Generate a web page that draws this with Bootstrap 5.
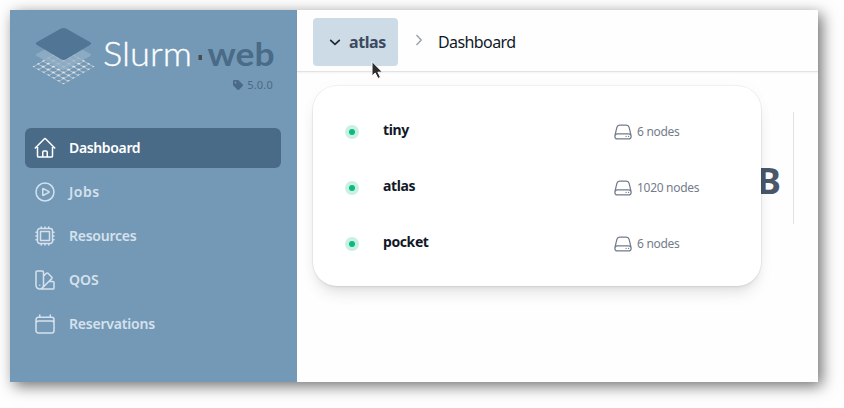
<!DOCTYPE html>
<html lang="en">
<head>
<meta charset="utf-8">
<meta name="viewport" content="width=device-width, initial-scale=1">
<title>Slurm-web</title>
<link href="https://cdn.jsdelivr.net/npm/bootstrap@5.3.0/dist/css/bootstrap.min.css" rel="stylesheet">
<style>
body{font-family:"Noto Sans","Open Sans",sans-serif;background:#fefefe;overflow:hidden;height:408px;padding:10px 26px 26px 10px}
svg{flex:none;display:block}
.ico{fill:none;stroke:currentColor;stroke-width:1.5;stroke-linecap:round;stroke-linejoin:round}
.window{height:372px;background:#fefefe;box-shadow:4px 4px 14px rgba(0,0,0,.56)}
.sidebar{width:287px;background:#7499b6;padding:15px 16px 0 15px}
.brand{height:103px}
.brand-version{font-size:11px;line-height:12px;color:#4a6b87;gap:4px;padding-right:8px;margin-top:-7px;letter-spacing:.2px}
.side-nav{gap:4px}
.side-nav .nav-link{height:40px;padding:0 8px;gap:12px;color:#d5e2ed;font-weight:600;font-size:14px;border-radius:6px}
.side-nav .nav-link.active{background:#4a6b87;color:#fff}
.side-nav span{letter-spacing:var(--ls,0);padding-bottom:2px}
.ls-a{--ls:-.35px}.ls-b{--ls:-.25px}.ls-c{--ls:-.2px}.ls-d{--ls:.5px}
.topbar{height:62px;border-bottom:1px solid #e2e3e5;padding:2px 16px 0;box-shadow:0 1px 2px rgba(0,0,0,.05)}
.cluster-btn{width:85px;height:48px;background:#cddbe6;border-radius:4px;border:0;color:#3c4a60;font-weight:700;font-size:16px;letter-spacing:-.4px;padding:0 0 0 14px;gap:6px}
.crumb-sep{margin-left:12px;color:#9ca3af;margin-top:-3px}
.crumb{margin-left:10px;font-size:16px;color:#111827;letter-spacing:-.6px}
.cluster-menu{left:16px;top:76px;width:448px;height:200px;border-radius:24px;background:#fff;padding:18px 32px 14px;box-shadow:0 0 0 1px rgba(17,24,39,.05),0 10px 15px -3px rgba(0,0,0,.1),0 4px 6px -4px rgba(0,0,0,.1),0 0 20px rgba(0,0,0,.02)}
.cluster-row{height:56px}
.status{width:14px;height:14px;background:#c9f1e3}
.status i{width:6px;height:6px;background:#0bb981}
.cluster-name{font-size:14px;font-weight:700;color:#111827;letter-spacing:-.4px;margin:-5px 0 0 24px;width:230px}
.nodes{font-size:12px;color:#747c8b;gap:4px}
.nodes span{letter-spacing:-.3px}
.stat{height:112px;margin:40px 24px 0 0;padding-right:12px;border-right:1px solid #e2e3e5}
.stat b{font-size:36px;line-height:40px;color:#4b5768;margin-top:26px}
.pointer{left:71px;top:50px;z-index:3}
</style>
<script src="https://cdn.jsdelivr.net/npm/bootstrap@5.3.0/dist/js/bootstrap.bundle.min.js"></script>
</head>
<body>
<svg width="0" height="0" class="position-absolute">
<symbol id="server" viewBox="0 0 24 24"><path d="M21.75 17.25v-.228a4.5 4.5 0 00-.12-1.03l-2.268-9.64a3.375 3.375 0 00-3.285-2.602H7.923a3.375 3.375 0 00-3.285 2.602l-2.268 9.64a4.5 4.5 0 00-.12 1.03v.228m19.5 0a3 3 0 01-3 3H5.25a3 3 0 01-3-3m19.5 0a3 3 0 00-3-3H5.25a3 3 0 00-3 3m16.5 0h.008v.008h-.008v-.008zm-3 0h.008v.008h-.008v-.008z"/></symbol>
</svg>
<div class="window d-flex">
  <aside class="sidebar flex-shrink-0">
    <div class="brand">
      <svg width="256" height="61" viewBox="25 25 256 61">
        <defs><pattern id="mesh" width="5" height="5" patternUnits="userSpaceOnUse" patternTransform="matrix(1.017 .583 -1.017 .583 63.5 49)"><path d="M0 0H5M0 0V5" stroke="#c3cfd9" stroke-width="1.1" fill="none"/><circle r="1.1" fill="#e6e6e6"/><circle cx="5" r="1.1" fill="#e6e6e6"/><circle cy="5" r="1.1" fill="#e6e6e6"/><circle cx="5" cy="5" r="1.1" fill="#e6e6e6"/></pattern></defs>
        <path d="M63.5 48.5L94.500 66.5L63.5 84.300L32.500 66.500Z" fill="url(#mesh)"/>
        <path d="M61 41q2.500-1.400 5 0L90.300 53.800q1.500 1 0 2.200L66 69.500q-2.500 1.400-5 0L36.700 56q-1.500-1.200 0-2.200Z" fill="#94b0c7" fill-opacity=".78"/>
        <path d="M61 28.600q2.500-1.400 5 0L90.300 42.300q1.800 1.200 0 2.400L66 59.200q-2.500 1.400-5 0L36.700 44.700q-1.800-1.200 0-2.400Z" fill="#507595"/>
        <text x="103" y="66" font-family="Lato, sans-serif" font-weight="300" font-size="33" fill="#fff" stroke="#fff" stroke-width=".3" textLength="89" lengthAdjust="spacingAndGlyphs">Slurm</text>
        <rect x="198.500" y="55" width="3.500" height="5" fill="#4b4b4f"/>
        <text x="207.500" y="66" font-family="Lato, sans-serif" font-weight="700" font-size="33" fill="#4a6b87" textLength="67" lengthAdjust="spacingAndGlyphs">web</text>
      </svg>
      <div class="brand-version d-flex justify-content-end align-items-center">
        <svg width="10" height="10" viewBox="0 0 20 20"><path fill="#4a6b87" fill-rule="evenodd" d="M0 2.500A2.500 2.500 0 012.500 0h7a3 3 0 012.100.9l7.500 7.600a3 3 0 010 4.200l-6.400 6.400a3 3 0 01-4.200 0L.9 11.600A3 3 0 010 9.500zM5 3.200a1.800 1.800 0 100 3.600 1.800 1.800 0 000-3.600z"/></svg>
        <span>5.0.0</span>
      </div>
    </div>
    <nav class="side-nav nav flex-column">
      <a class="nav-link active d-flex align-items-center ls-a" href="#"><svg class="ico" width="24" height="24" viewBox="0 0 24 24"><path d="M2.250 12l8.954-8.955c.44-.439 1.152-.439 1.591 0L21.750 12M4.500 9.750v10.125c0 .621.504 1.125 1.125 1.125H9.750v-4.875c0-.621.504-1.125 1.125-1.125h2.250c.621 0 1.125.504 1.125 1.125V21h4.125c.621 0 1.125-.504 1.125-1.125V9.750M8.250 21h8.250"/></svg><span>Dashboard</span></a>
      <a class="nav-link d-flex align-items-center ls-d" href="#"><svg class="ico" width="24" height="24" viewBox="0 0 24 24"><path d="M21 12a9 9 0 11-18 0 9 9 0 0118 0zM15.910 11.672a.375.375 0 010 .656l-5.603 3.113a.375.375 0 01-.557-.328V8.887c0-.286.307-.466.557-.327l5.603 3.112z"/></svg><span>Jobs</span></a>
      <a class="nav-link d-flex align-items-center ls-b" href="#"><svg class="ico" width="24" height="24" viewBox="0 0 24 24"><path d="M8.250 3v1.500M4.500 8.250H3m18 0h-1.500M4.500 12H3m18 0h-1.500m-15 3.750H3m18 0h-1.500M8.250 19.500V21M12 3v1.500m0 15V21m3.750-18v1.500m0 15V21m-9-1.500h10.500a2.250 2.250 0 002.250-2.250V6.750a2.250 2.250 0 00-2.250-2.250H6.750A2.250 2.250 0 004.500 6.750v10.500a2.250 2.250 0 002.250 2.250zm.75-12h9v9h-9v-9z"/></svg><span>Resources</span></a>
      <a class="nav-link d-flex align-items-center" href="#"><svg class="ico" width="24" height="24" viewBox="0 0 24 24"><path d="M4.098 19.902a3.750 3.750 0 005.304 0l6.401-6.402M6.750 21A3.750 3.750 0 013 17.250V4.125C3 3.504 3.504 3 4.125 3h5.250c.621 0 1.125.504 1.125 1.125v4.072M6.750 21a3.750 3.750 0 003.750-3.750V8.197M6.750 21h13.125c.621 0 1.125-.504 1.125-1.125v-5.250c0-.621-.504-1.125-1.125-1.125h-4.072M10.500 8.197l2.880-2.880c.438-.439 1.150-.439 1.590 0l3.712 3.713c.44.44.44 1.152 0 1.590l-2.879 2.880M6.750 17.250h.008v.008H6.750v-.008z"/></svg><span>QOS</span></a>
      <a class="nav-link d-flex align-items-center ls-c" href="#"><svg class="ico" width="24" height="24" viewBox="0 0 24 24"><path d="M6.750 3v2.250M17.250 3v2.250M3 18.750V7.500a2.250 2.250 0 012.250-2.250h13.500A2.250 2.250 0 0121 7.500v11.250A2.250 2.250 0 0118.750 21H5.250A2.250 2.250 0 013 18.750M3 11.250A2.250 2.250 0 015.250 9h13.500A2.250 2.250 0 0121 11.250"/></svg><span>Reservations</span></a>
    </nav>
  </aside>
  <main class="flex-grow-1 position-relative">
    <header class="topbar d-flex align-items-center">
      <button type="button" class="cluster-btn d-flex align-items-center" aria-expanded="true"><svg width="16" height="16" viewBox="0 0 16 16" fill="none" stroke="#1f2937" stroke-width="1.700" stroke-linecap="round" stroke-linejoin="round"><path d="M3.700 6.300L8 10.400L12.300 6.300"/></svg><span>atlas</span></button>
      <svg class="crumb-sep" width="18" height="18" viewBox="0 0 18 18" fill="none" stroke="currentColor" stroke-width="1.500"><path d="M6.500 4L11.200 9L6.500 14"/></svg>
      <span class="crumb">Dashboard</span>
    </header>
    <section class="stat d-flex justify-content-end align-items-center"><b>B</b></section>
    <div class="cluster-menu position-absolute">
      <div class="cluster-row d-flex align-items-center"><span class="status rounded-circle d-flex align-items-center justify-content-center"><i class="rounded-circle"></i></span><span class="cluster-name">tiny</span><span class="nodes d-flex align-items-center"><svg class="ico" width="20" height="20"><use href="#server"/></svg><span>6 nodes</span></span></div>
      <div class="cluster-row d-flex align-items-center"><span class="status rounded-circle d-flex align-items-center justify-content-center"><i class="rounded-circle"></i></span><span class="cluster-name">atlas</span><span class="nodes d-flex align-items-center"><svg class="ico" width="20" height="20"><use href="#server"/></svg><span>1020 nodes</span></span></div>
      <div class="cluster-row d-flex align-items-center"><span class="status rounded-circle d-flex align-items-center justify-content-center"><i class="rounded-circle"></i></span><span class="cluster-name">pocket</span><span class="nodes d-flex align-items-center"><svg class="ico" width="20" height="20"><use href="#server"/></svg><span>6 nodes</span></span></div>
    </div>
    <svg class="pointer position-absolute" width="20" height="22" viewBox="0 0 20 22"><path d="M4 1.500V16L7.200 13L10 18.500L12.500 17.300L9.900 12.200H14.500Z" fill="#2d2d2d" stroke="#fff" stroke-width="1"/></svg>
  </main>
</div>
</body>
</html>
